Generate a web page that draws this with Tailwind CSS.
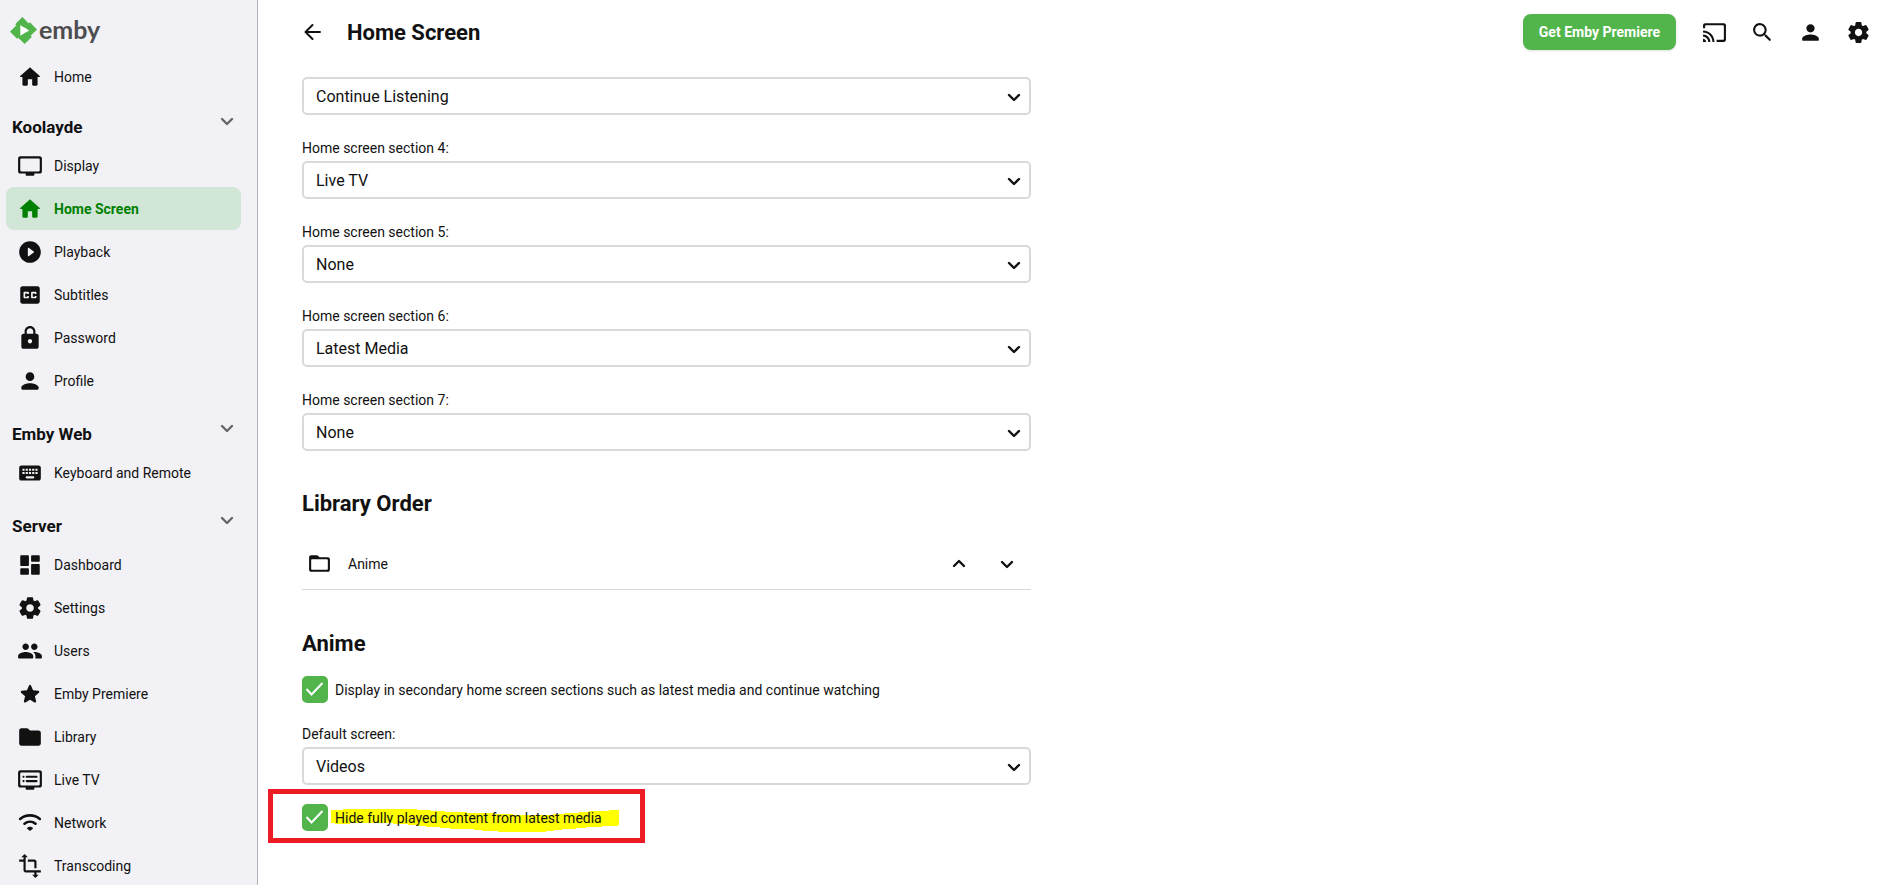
<!doctype html>
<html lang="en">
<head>
    <meta charset="UTF-8">
    <meta name="viewport" content="width=device-width, initial-scale=1.0">
    <title>Home Screen - Emby</title>
    <script src="https://cdn.jsdelivr.net/npm/@tailwindcss/browser@4"></script>
</head>
<body class="flex h-screen overflow-hidden bg-white font-['Roboto',sans-serif] text-[14px] leading-5 text-[#111111]">

<!-- icons used more than once -->
<svg class="hidden">
    <symbol id="home" viewBox="0 0 24 24"><path d="M10 19v-5h4v5c0 .55.45 1 1 1h3c.55 0 1-.45 1-1v-7h1.7c.46 0 .68-.57.33-.87L12.67 3.6c-.38-.34-.96-.34-1.34 0l-8.36 7.53c-.34.3-.13.87.33.87H5v7c0 .55.45 1 1 1h3c.55 0 1-.45 1-1z"/></symbol>
    <symbol id="person" viewBox="0 0 24 24"><path d="M12 12c2.21 0 4-1.79 4-4s-1.79-4-4-4-4 1.79-4 4 1.79 4 4 4zm0 2c-2.67 0-8 1.34-8 4v1c0 .55.45 1 1 1h14c.55 0 1-.45 1-1v-1c0-2.66-5.33-4-8-4z"/></symbol>
    <symbol id="settings" viewBox="0 0 24 24"><path d="M19.5 12c0-.23-.01-.45-.03-.68l1.86-1.41c.4-.3.51-.86.26-1.3l-1.87-3.23c-.25-.44-.79-.62-1.25-.42l-2.15.91c-.37-.26-.76-.49-1.17-.68l-.29-2.31c-.06-.5-.49-.88-.99-.88h-3.73c-.51 0-.94.38-1 .88l-.29 2.31c-.41.19-.8.42-1.17.68l-2.15-.91c-.46-.2-1-.02-1.25.42L2.41 8.62c-.25.44-.14.99.26 1.3l1.86 1.41c-.02.22-.03.44-.03.67s.01.45.03.68l-1.86 1.41c-.4.3-.51.86-.26 1.3l1.87 3.23c.25.44.79.62 1.25.42l2.15-.91c.37.26.76.49 1.17.68l.29 2.31c.06.5.49.88.99.88h3.73c.5 0 .93-.38.99-.88l.29-2.31c.41-.19.8-.42 1.17-.68l2.15.91c.46.2 1 .02 1.25-.42l1.87-3.23c.25-.44.14-.99-.26-1.3l-1.86-1.41c.03-.23.04-.45.04-.68zm-7.46 3.5c-1.93 0-3.5-1.57-3.5-3.5s1.57-3.5 3.5-3.5 3.5 1.57 3.5 3.5-1.57 3.5-3.5 3.5z"/></symbol>
    <symbol id="down" viewBox="0 0 24 24"><path d="M7 10l5 5 5-5" fill="none" stroke="currentColor" stroke-width="2.4" stroke-linecap="round" stroke-linejoin="round"/></symbol>
    <symbol id="up" viewBox="0 0 24 24"><path d="M7 14l5-5 5 5" fill="none" stroke="currentColor" stroke-width="2.4" stroke-linecap="round" stroke-linejoin="round"/></symbol>
</svg>

<aside class="h-full w-[258px] shrink-0 overflow-hidden border-r border-[#b4b3bc] bg-[#f2f1f6]">
    <a href="#" class="flex h-[55px] items-center gap-0.5 pt-1.5 pl-2.5" aria-label="Emby">
        <svg class="size-[27px]" viewBox="0 0 24 24">
            <path fill="#fff" d="M8 6h10v12H8z"/>
            <path fill="#52b54b" d="M11.041 0c-.007 0-1.456 1.43-3.219 3.176L4.615 6.352l.512.513.512.512-2.819 2.791L0 12.961l1.83 1.848c1.006 1.016 2.438 2.46 3.182 3.209l1.351 1.359.508-.496c.28-.273.515-.498.524-.498.008 0 1.266 1.264 2.794 2.808L12.97 24l.187-.182c.23-.225 5.007-4.95 5.717-5.656l.52-.516-.502-.513c-.276-.282-.5-.52-.496-.53.003-.009 1.264-1.26 2.802-2.783 1.538-1.522 2.8-2.776 2.803-2.785.005-.012-3.617-3.684-6.107-6.193L17.65 4.6l-.505.505c-.279.278-.517.501-.53.497-.013-.005-1.27-1.267-2.793-2.805A449.655 449.655 0 0011.041 0zM9.223 7.367c.091.038 7.951 4.608 7.957 4.627.003.013-1.781 1.056-3.965 2.32a999.898 999.898 0 01-3.996 2.307c-.019.006-.026-1.266-.026-4.629 0-3.7.007-4.634.03-4.625Z"/>
        </svg>
        <span class="pb-1 font-['Lato',sans-serif] text-[25px] leading-7 font-bold text-[#4d4d4f]">emby</span>
    </a>

    <nav class="pr-[16px] pl-[6px]">
        <a href="#" class="flex h-[43px] items-center gap-[11px] rounded-lg pl-[11px]">
            <svg class="size-[26px] fill-current"><use href="#home"/></svg>Home
        </a>

        <button type="button" class="flex h-[46px] w-full items-center justify-between pr-0.5 pl-1.5 text-[17px] font-bold">
            <span class="pt-3">Koolayde</span>
            <svg class="size-6 text-[#666666]"><use href="#down"/></svg>
        </button>
        <a href="#" class="flex h-[43px] items-center gap-[11px] rounded-lg pl-[11px]">
            <svg class="size-[26px] fill-current" viewBox="0 0 24 24"><path d="M21 3H3c-1.1 0-2 .9-2 2v12c0 1.1.9 2 2 2h5v1c0 .55.45 1 1 1h6c.55 0 1-.45 1-1v-1h5c1.1 0 1.99-.9 1.99-2L23 5c0-1.1-.9-2-2-2zm-1 14H4c-.55 0-1-.45-1-1V6c0-.55.45-1 1-1h16c.55 0 1 .45 1 1v10c0 .55-.45 1-1 1z"/></svg>Display
        </a>
        <a href="#" class="flex h-[43px] items-center gap-[11px] rounded-lg bg-[#d1e6d6] pl-[11px] font-bold text-[#008000]">
            <svg class="size-[26px] fill-current"><use href="#home"/></svg>Home Screen
        </a>
        <a href="#" class="flex h-[43px] items-center gap-[11px] rounded-lg pl-[11px]">
            <svg class="size-[26px] fill-current" viewBox="0 0 24 24"><path d="M12 2C6.48 2 2 6.48 2 12s4.480 10 10 10 10-4.480 10-10S17.520 2 12 2zm-2 13.500v-7c0-.41.47-.65.8-.4l4.670 3.500c.27.2.27.6 0 .8l-4.670 3.500c-.33.25-.8.010-.8-.4z"/></svg>Playback
        </a>
        <a href="#" class="flex h-[43px] items-center gap-[11px] rounded-lg pl-[11px]">
            <svg class="size-[26px] fill-current" viewBox="0 0 24 24"><path d="M19 4H5c-1.110 0-2 .9-2 2v12c0 1.100.89 2 2 2h14c1.100 0 2-.9 2-2V6c0-1.100-.9-2-2-2zm-8 7H9.500v-.5h-2v3h2V13H11v1c0 .55-.45 1-1 1H7c-.55 0-1-.45-1-1v-4c0-.55.45-1 1-1h3c.55 0 1 .45 1 1v1zm7 0h-1.500v-.5h-2v3h2V13H18v1c0 .55-.45 1-1 1h-3c-.55 0-1-.45-1-1v-4c0-.55.45-1 1-1h3c.55 0 1 .45 1 1v1z"/></svg>Subtitles
        </a>
        <a href="#" class="flex h-[43px] items-center gap-[11px] rounded-lg pl-[11px]">
            <svg class="size-[26px] fill-current" viewBox="0 0 24 24"><path d="M18 8h-1V6c0-2.760-2.240-5-5-5S7 3.240 7 6v2H6c-1.100 0-2 .9-2 2v10c0 1.100.9 2 2 2h12c1.100 0 2-.9 2-2V10c0-1.100-.9-2-2-2zm-6 9c-1.100 0-2-.9-2-2s.9-2 2-2 2 .9 2 2-.9 2-2 2zM9 8V6c0-1.660 1.340-3 3-3s3 1.340 3 3v2H9z"/></svg>Password
        </a>
        <a href="#" class="flex h-[43px] items-center gap-[11px] rounded-lg pl-[11px]">
            <svg class="size-[26px] fill-current"><use href="#person"/></svg>Profile
        </a>

        <button type="button" class="mt-[3px] flex h-[46px] w-full items-center justify-between pr-0.5 pl-1.5 text-[17px] font-bold">
            <span class="pt-3">Emby Web</span>
            <svg class="size-6 text-[#666666]"><use href="#down"/></svg>
        </button>
        <a href="#" class="flex h-[43px] items-center gap-[11px] rounded-lg pl-[11px]">
            <svg class="size-[26px] fill-current" viewBox="0 0 24 24"><path d="M20 5H4c-1.100 0-1.990.9-1.990 2L2 17c0 1.100.9 2 2 2h16c1.100 0 2-.9 2-2V7c0-1.100-.9-2-2-2zm-9 3h2v2h-2V8zm0 3h2v2h-2v-2zM8 8h2v2H8V8zm0 3h2v2H8v-2zm-1 2H5v-2h2v2zm0-3H5V8h2v2zm8 7H9c-.55 0-1-.45-1-1s.45-1 1-1h6c.55 0 1 .45 1 1s-.45 1-1 1zm1-4h-2v-2h2v2zm0-3h-2V8h2v2zm3 3h-2v-2h2v2zm0-3h-2V8h2v2z"/></svg>Keyboard and Remote
        </a>

        <button type="button" class="mt-[3px] flex h-[46px] w-full items-center justify-between pr-0.5 pl-1.5 text-[17px] font-bold">
            <span class="pt-3">Server</span>
            <svg class="size-6 text-[#666666]"><use href="#down"/></svg>
        </button>
        <a href="#" class="flex h-[43px] items-center gap-[11px] rounded-lg pl-[11px]">
            <svg class="size-[26px] fill-current" viewBox="0 0 24 24"><path d="M4 13h6c.55 0 1-.45 1-1V4c0-.55-.45-1-1-1H4c-.55 0-1 .45-1 1v8c0 .55.45 1 1 1zm0 8h6c.55 0 1-.45 1-1v-4c0-.55-.45-1-1-1H4c-.55 0-1 .45-1 1v4c0 .55.45 1 1 1zm10 0h6c.55 0 1-.45 1-1v-8c0-.55-.45-1-1-1h-6c-.55 0-1 .45-1 1v8c0 .55.45 1 1 1zM13 4v4c0 .55.45 1 1 1h6c.55 0 1-.45 1-1V4c0-.55-.45-1-1-1h-6c-.55 0-1 .45-1 1z"/></svg>Dashboard
        </a>
        <a href="#" class="flex h-[43px] items-center gap-[11px] rounded-lg pl-[11px]">
            <svg class="size-[26px] fill-current"><use href="#settings"/></svg>Settings
        </a>
        <a href="#" class="flex h-[43px] items-center gap-[11px] rounded-lg pl-[11px]">
            <svg class="size-[26px] fill-current" viewBox="0 0 24 24"><path d="M16 11c1.660 0 2.990-1.340 2.990-3S17.660 5 16 5s-3 1.340-3 3 1.340 3 3 3zm-8 0c1.660 0 2.990-1.340 2.990-3S9.660 5 8 5 5 6.340 5 8s1.340 3 3 3zm0 2c-2.330 0-7 1.170-7 3.500V18c0 .55.45 1 1 1h12c.55 0 1-.45 1-1v-1.500c0-2.330-4.670-3.500-7-3.500zm8 0c-.29 0-.62.020-.97.050.020.010.030.030.040.040 1.140.83 1.930 1.940 1.930 3.410V18c0 .35-.07.69-.18 1H22c.55 0 1-.45 1-1v-1.500c0-2.330-4.670-3.500-7-3.500z"/></svg>Users
        </a>
        <a href="#" class="flex h-[43px] items-center gap-[11px] rounded-lg pl-[11px]">
            <svg class="size-[26px] fill-current" viewBox="0 0 24 24"><path d="M12 17.270l4.150 2.510c.76.46 1.690-.22 1.490-1.080l-1.100-4.720 3.670-3.180c.67-.58.31-1.680-.57-1.750l-4.830-.41-1.890-4.460c-.34-.81-1.500-.81-1.840 0L9.190 8.630l-4.830.41c-.88.07-1.240 1.170-.57 1.750l3.670 3.180-1.100 4.720c-.2.86.73 1.540 1.490 1.080l4.150-2.500z"/></svg>Emby Premiere
        </a>
        <a href="#" class="flex h-[43px] items-center gap-[11px] rounded-lg pl-[11px]">
            <svg class="size-[26px] fill-current" viewBox="0 0 24 24"><path d="M10.590 4.590C10.210 4.210 9.700 4 9.170 4H4c-1.100 0-1.990.9-1.990 2L2 18c0 1.100.9 2 2 2h16c1.100 0 2-.9 2-2V8c0-1.100-.9-2-2-2h-8l-1.410-1.410z"/></svg>Library
        </a>
        <a href="#" class="flex h-[43px] items-center gap-[11px] rounded-lg pl-[11px]">
            <svg class="size-[26px] fill-current" viewBox="0 0 24 24"><path d="M21 3H3c-1.100 0-2 .9-2 2v12c0 1.100.9 2 2 2h5v1c0 .55.45 1 1 1h6c.55 0 1-.45 1-1v-1h5c1.100 0 1.990-.9 1.990-2L23 5c0-1.100-.9-2-2-2zm-1 14H4c-.55 0-1-.45-1-1V6c0-.55.45-1 1-1h16c.55 0 1 .45 1 1v10c0 .55-.45 1-1 1zM19 9c0 .55-.45 1-1 1H9c-.55 0-1-.45-1-1s.45-1 1-1h9c.55 0 1 .45 1 1zm0 4c0 .55-.45 1-1 1H9c-.55 0-1-.45-1-1s.45-1 1-1h9c.55 0 1 .45 1 1zM7 9c0 .55-.45 1-1 1s-1-.45-1-1 .45-1 1-1 1 .45 1 1zm0 4c0 .55-.45 1-1 1s-1-.45-1-1 .45-1 1-1 1 .45 1 1z"/></svg>Live TV
        </a>
        <a href="#" class="flex h-[43px] items-center gap-[11px] rounded-lg pl-[11px]">
            <svg class="size-[26px]" viewBox="0 0 24 24" fill="none" stroke="currentColor" stroke-width="2.4" stroke-linecap="round"><path d="M2.900 8.300c5.200-4.400 13-4.400 18.200 0M6.900 12.600c3-2.400 7.200-2.400 10.200 0"/><path d="M12 19.300l-2.800-2.300c1-1.900 4.600-1.900 5.600 0z" fill="currentColor" stroke="none"/></svg>Network
        </a>
        <a href="#" class="flex h-[43px] items-center gap-[11px] rounded-lg pl-[11px]">
            <svg class="size-[26px] fill-current" viewBox="0 0 24 24"><path d="M22 18v-2H8V4h2L7 1 4 4h2v2H2v2h4v8c0 1.100.9 2 2 2h8v2h-2l3 3 3-3h-2v-2h4zM10 8h6v6h2V8c0-1.100-.9-2-2-2h-6v2z"/></svg>Transcoding
        </a>
    </nav>
</aside>

<div class="min-w-0 flex-1">
    <header class="flex h-16 items-center pr-[9px] pl-[31px]">
        <button type="button" class="flex size-12 items-center justify-center" aria-label="Back">
            <svg class="size-6" viewBox="0 0 24 24" fill="none" stroke="currentColor" stroke-width="2" stroke-linecap="round" stroke-linejoin="round"><path d="M19 12H5M11.500 5l-7 7 7 7"/></svg>
        </button>
        <h1 class="ml-[10px] flex-1 pt-0.5 text-[22px] leading-7 font-bold">Home Screen</h1>
        <button type="button" class="mr-[14px] h-9 rounded-lg bg-[#52b54b] px-4 font-bold text-white shadow">Get Emby Premiere</button>
        <button type="button" class="flex size-12 items-center justify-center" aria-label="Cast">
            <svg class="size-[25px] fill-current" viewBox="0 0 24 24"><path d="M21 3H3c-1.100 0-2 .9-2 2v3h2V6c0-.55.45-1 1-1h16c.55 0 1 .45 1 1v12c0 .55-.45 1-1 1h-6v2h7c1.100 0 2-.9 2-2V5c0-1.100-.9-2-2-2zM1 18v3h3c0-1.660-1.340-3-3-3zm0-4v2c2.760 0 5 2.240 5 5h2c0-3.870-3.130-7-7-7zm0-4v2c4.970 0 9 4.030 9 9h2c0-6.080-4.930-11-11-11z"/></svg>
        </button>
        <button type="button" class="flex size-12 items-center justify-center" aria-label="Search">
            <svg class="size-[25px] fill-current" viewBox="0 0 24 24"><path d="M15.500 14h-.79l-.28-.27c1.200-1.400 1.820-3.310 1.480-5.340-.47-2.780-2.790-5-5.590-5.340-4.230-.52-7.790 3.040-7.270 7.270.34 2.800 2.560 5.120 5.340 5.590 2.030.34 3.940-.28 5.340-1.480l.27.28v.79l4.250 4.250c.41.41 1.080.41 1.490 0 .41-.41.41-1.080 0-1.490L15.500 14zm-6 0C7.010 14 5 11.990 5 9.500S7.010 5 9.500 5 14 7.010 14 9.500 11.990 14 9.500 14z"/></svg>
        </button>
        <button type="button" class="flex size-12 items-center justify-center" aria-label="User">
            <svg class="size-[25px] fill-current"><use href="#person"/></svg>
        </button>
        <button type="button" class="flex size-12 items-center justify-center" aria-label="Settings">
            <svg class="size-[25px] fill-current"><use href="#settings"/></svg>
        </button>
    </header>

    <main class="mx-11 max-w-[729px] pt-[13px]">
        <form>
            <div class="flex flex-col gap-[23px]">
                <div class="relative">
                    <select aria-label="Home screen section 3" class="block h-[38px] w-full appearance-none rounded-[5px] border-2 border-[#d9d9d9] bg-white pt-0.5 pl-3 text-base">
                        <option>Continue Listening</option>
                    </select>
                    <svg class="pointer-events-none absolute top-2 right-[5px] size-6"><use href="#down"/></svg>
                </div>
                <div>
                    <label for="section4" class="mb-[3px] block">Home screen section 4:</label>
                    <div class="relative">
                        <select id="section4" class="block h-[38px] w-full appearance-none rounded-[5px] border-2 border-[#d9d9d9] bg-white pt-0.5 pl-3 text-base">
                            <option>Live TV</option>
                        </select>
                        <svg class="pointer-events-none absolute top-2 right-[5px] size-6"><use href="#down"/></svg>
                    </div>
                </div>
                <div>
                    <label for="section5" class="mb-[3px] block">Home screen section 5:</label>
                    <div class="relative">
                        <select id="section5" class="block h-[38px] w-full appearance-none rounded-[5px] border-2 border-[#d9d9d9] bg-white pt-0.5 pl-3 text-base">
                            <option>None</option>
                        </select>
                        <svg class="pointer-events-none absolute top-2 right-[5px] size-6"><use href="#down"/></svg>
                    </div>
                </div>
                <div>
                    <label for="section6" class="mb-[3px] block">Home screen section 6:</label>
                    <div class="relative">
                        <select id="section6" class="block h-[38px] w-full appearance-none rounded-[5px] border-2 border-[#d9d9d9] bg-white pt-0.5 pl-3 text-base">
                            <option>Latest Media</option>
                        </select>
                        <svg class="pointer-events-none absolute top-2 right-[5px] size-6"><use href="#down"/></svg>
                    </div>
                </div>
                <div>
                    <label for="section7" class="mb-[3px] block">Home screen section 7:</label>
                    <div class="relative">
                        <select id="section7" class="block h-[38px] w-full appearance-none rounded-[5px] border-2 border-[#d9d9d9] bg-white pt-0.5 pl-3 text-base">
                            <option>None</option>
                        </select>
                        <svg class="pointer-events-none absolute top-2 right-[5px] size-6"><use href="#down"/></svg>
                    </div>
                </div>
            </div>

            <h2 class="mt-[39px] text-[22px] leading-7 font-bold">Library Order</h2>
            <div class="mt-5 flex h-[52px] items-center border-b border-[#d9d9d9] pl-[5px]">
                <svg class="size-[25px] fill-current" viewBox="0 0 24 24"><path d="M20 6h-8l-1.410-1.410C10.210 4.210 9.700 4 9.170 4H4c-1.100 0-1.990.9-1.990 2L2 18c0 1.100.9 2 2 2h16c1.100 0 2-.9 2-2V8c0-1.100-.9-2-2-2zm-1 12H5c-.55 0-1-.45-1-1V9c0-.55.45-1 1-1h14c.55 0 1 .45 1 1v8c0 .55-.45 1-1 1z"/></svg>
                <span class="ml-4 flex-1">Anime</span>
                <button type="button" class="flex size-12 items-center justify-center" aria-label="Move up"><svg class="size-6"><use href="#up"/></svg></button>
                <button type="button" class="flex size-12 items-center justify-center" aria-label="Move down"><svg class="size-6"><use href="#down"/></svg></button>
            </div>

            <h2 class="mt-10 text-[22px] leading-7 font-bold">Anime</h2>
            <div class="mt-[18px] flex items-center gap-[7px]">
                <span class="relative flex">
                    <input id="secondary" type="checkbox" checked class="h-[27px] w-[26px] appearance-none rounded-[5px] bg-[#52b54b]">
                    <svg class="pointer-events-none absolute top-0 left-0 size-[26px]" viewBox="0 0 26 26" fill="none" stroke="#fff" stroke-width="2"><path d="M4.500 13l5 5.500L20.500 7"/></svg>
                </span>
                <label for="secondary">Display in secondary home screen sections such as latest media and continue watching</label>
            </div>

            <label for="defaultScreen" class="mt-[21px] mb-[3px] block">Default screen:</label>
            <div class="relative">
                <select id="defaultScreen" class="block h-[38px] w-full appearance-none rounded-[5px] border-2 border-[#d9d9d9] bg-white pt-0.5 pl-3 text-base">
                    <option>Videos</option>
                </select>
                <svg class="pointer-events-none absolute top-2 right-[5px] size-6"><use href="#down"/></svg>
            </div>

            <div class="relative mt-[19px] flex items-center gap-[7px]">
                <!-- red frame and marker stroke around the option -->
                <div class="pointer-events-none absolute -top-[15px] -left-[34px] h-[54px] w-[377px] border-5 border-[#ed1c24]"></div>
                <span class="relative flex">
                    <input id="hidePlayed" type="checkbox" checked class="h-[27px] w-[26px] appearance-none rounded-[5px] bg-[#52b54b]">
                    <svg class="pointer-events-none absolute top-0 left-0 size-[26px]" viewBox="0 0 26 26" fill="none" stroke="#fff" stroke-width="2"><path d="M4.500 13l5 5.500L20.500 7"/></svg>
                </span>
                <svg class="pointer-events-none absolute top-[4px] left-[29px] h-6 w-[288px]" viewBox="0 0 288 24"><path fill="#ffff00" d="M0 2h12V1h74v1h14v1h14v1h22v1h26v1h20v1h40V6h12V5h14V4h10V3h20V2h14V1h10V0h5v17h-20v1h-16v1h-16v1h-10v1h-14v1h-8v1h-8v1h-48v-1h-16v-1h-8v-1h-24v-1h-10v-1h-14v-1h-10v-1H77v-1H62v-1H19v1H4v-1H0z"/></svg>
                <label for="hidePlayed" class="relative">Hide fully played content from latest media</label>
            </div>
        </form>
    </main>
</div>
</body>
</html>
